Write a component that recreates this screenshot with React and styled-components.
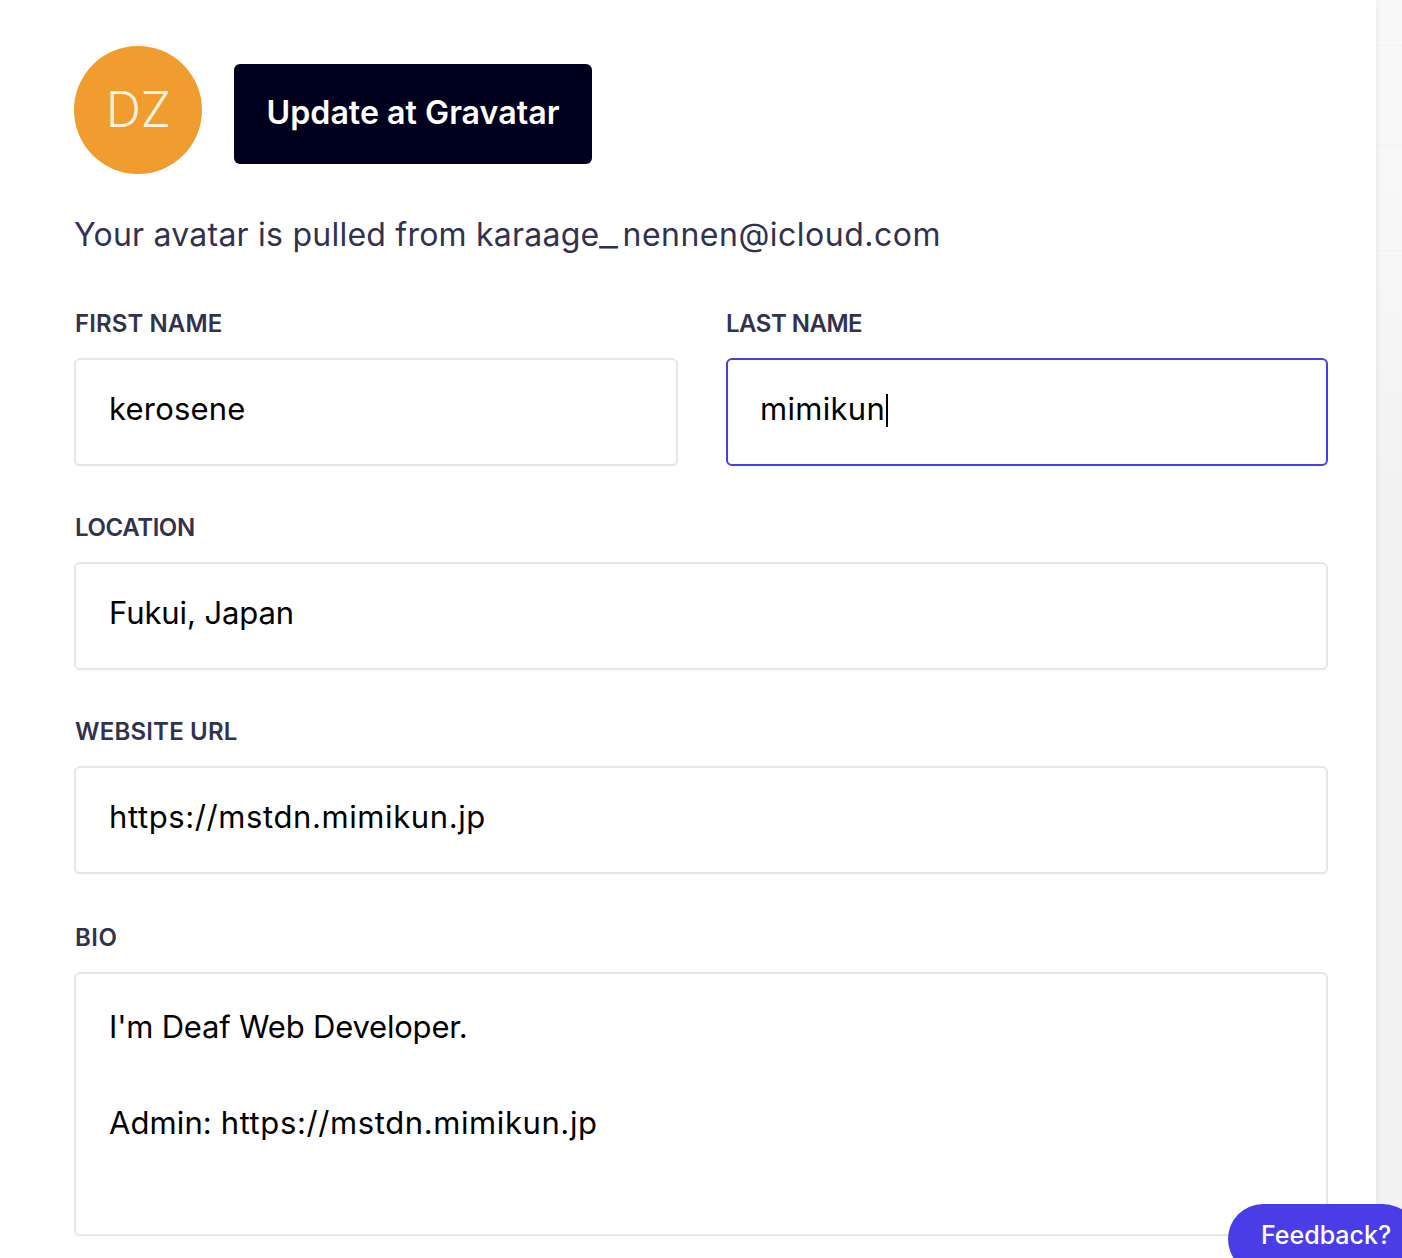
import React from "react";
import styled, { createGlobalStyle } from "styled-components";

const Global = createGlobalStyle`
  html, body { margin: 0; padding: 0; background: #f2f2f2; }
  body { font-family: Inter, "Liberation Sans", sans-serif; }
  * { box-sizing: border-box; }
`;

const Page = styled.div`
  position: relative;
  display: flex;
  width: 1402px;
  height: 1258px;
  overflow: hidden;
`;

const Panel = styled.main`
  width: 1376px;
  flex: none;
  background: #fff;
  padding: 46px 48px 0 74px;
  box-shadow: 0 0 8px rgba(0, 0, 0, 0.08);
  z-index: 1;
`;

const Rail = styled.aside`
  flex: 1;
  display: flex;
  flex-direction: column;
  background: linear-gradient(#f9f9f9, #f7f7f7 250px, #f2f2f2 500px);
  padding-top: 45px;
`;

const RailRow = styled.div`
  height: ${(p) => p.$h}px;
  border-top: 1px solid #f3f3f3;
`;

const AvatarRow = styled.div`
  display: flex;
  align-items: center;
  gap: 32px;
`;

const Avatar = styled.div`
  width: 128px;
  height: 128px;
  padding-bottom: 2px;
  border-radius: 50%;
  background: #f09c2e;
  color: #fdf3dc;
  display: flex;
  align-items: center;
  justify-content: center;
  font-size: 49px;
  font-weight: 300;
  letter-spacing: -0.5px;
`;

const Button = styled.button`
  width: 358px;
  height: 100px;
  margin: 8px 0 0;
  padding: 0 0 4px;
  border: 0;
  border-radius: 6px;
  background: #00001e;
  color: #fff;
  font-family: inherit;
  font-size: 32.2px;
  font-weight: 600;
`;

const Hint = styled.p`
  margin: 39px 0 0;
  font-size: 32px;
  line-height: 44px;
  color: #32324e;
  font-weight: 400;
  letter-spacing: 0.23px;
`;

const Email = styled.span`
  letter-spacing: 0.5px;
`;

const Underscore = styled.span`
  display: inline-block;
  width: 23px;
  transform: scaleX(1.3);
  transform-origin: left;
`;

const Columns = styled.div`
  display: grid;
  grid-template-columns: 604px 602px;
  column-gap: 48px;
  margin-top: 51px;
`;

const Group = styled.div`
  margin-top: ${(p) => p.$top || 0}px;
`;

const Label = styled.label`
  display: block;
  margin-left: ${(p) => p.$inset ?? 1}px;
  height: 50px;
  font-size: 24px;
  line-height: 32px;
  font-weight: 600;
  color: #32324e;
  letter-spacing: ${(p) => p.$spacing || 0}px;
`;

const Field = styled.div`
  height: ${(p) => p.$height || 108}px;
  border: 2px solid ${(p) => (p.$focused ? "#4a3de8" : "#e6e6e6")};
  border-radius: 6px;
  padding: ${(p) => p.$pad || 27}px 33px 0 ${(p) => (p.$focused ? 32 : 33)}px;
  background: #fff;
  box-shadow: 0 1px 2px rgba(0, 0, 0, 0.03);
  font-size: 31px;
  line-height: 44px;
  color: #000;
  letter-spacing: 0.1px;
`;

const Spaced = styled.span`
  letter-spacing: ${(p) => p.$by}px;
`;

const Line = styled.div`
  height: 48px;
`;

const Caret = styled.span`
  display: inline-block;
  width: 2px;
  height: 33px;
  background: #000;
  vertical-align: -7px;
  margin-left: 1px;
`;

const Feedback = styled.button`
  position: absolute;
  left: 1228px;
  top: 1204px;
  width: 190px;
  height: 70px;
  border: 0;
  padding: 0 0 9px 33px;
  border-radius: 35px;
  background: #4a3de8;
  color: #fff;
  text-align: left;
  font-family: Inter, "Liberation Sans", sans-serif;
  font-size: 25px;
  font-weight: 500;
  z-index: 2;
`;

export default function App() {
  return (
    <Page>
      <Global />
      <Panel>
        <AvatarRow>
          <Avatar>DZ</Avatar>
          <Button>Update at Gravatar</Button>
        </AvatarRow>
        <Hint>
          Your avatar is pulled from karaage<Underscore>_</Underscore>
          <Email>nennen@icloud.com</Email>
        </Hint>
        <Columns>
          <Group>
            <Label $spacing={0.1}>FIRST NAME</Label>
            <Field>
              <Spaced $by={0.2}>kerosene</Spaced>
            </Field>
          </Group>
          <Group>
            <Label $inset={0} $spacing={-0.5}>LAST NAME</Label>
            <Field $focused>
              <Spaced $by={0.3}>mimikun</Spaced>
              <Caret />
            </Field>
          </Group>
        </Columns>
        <Group $top={46}>
          <Label $spacing={-0.4}>LOCATION</Label>
          <Field>
            <Spaced $by={-0.1}>Fukui, Japan</Spaced>
          </Field>
        </Group>
        <Group $top={46}>
          <Label $spacing={0.2}>WEBSITE URL</Label>
          <Field>
            <Spaced $by={0.6}>https://mstdn.mimikun.jp</Spaced>
          </Field>
        </Group>
        <Group $top={48}>
          <Label $spacing={0.5}>BIO</Label>
          <Field $height={264} $pad={31}>
            <Line>
              <Spaced $by={-0.2}>I'm Deaf Web Developer.</Spaced>
            </Line>
            <Line />
            <Line>
              Admin: <Spaced $by={0.6}>https://mstdn.mimikun.jp</Spaced>
            </Line>
          </Field>
        </Group>
      </Panel>
      <Rail>
        <RailRow $h={100} />
        <RailRow $h={105} />
        <RailRow $h={100} />
      </Rail>
      <Feedback>Feedback?</Feedback>
    </Page>
  );
}
